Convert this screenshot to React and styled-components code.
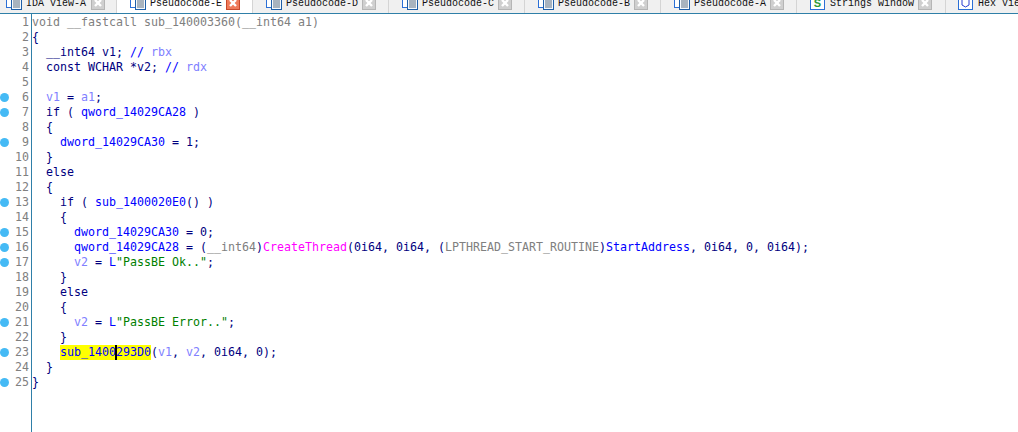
import styled, { createGlobalStyle } from 'styled-components';

const Global = createGlobalStyle`
  html, body {
    margin: 0;
    padding: 0;
    background: #fff;
  }
`;

const Page = styled.div`
  width: 1018px;
  height: 432px;
  display: flex;
  flex-direction: column;
  overflow: hidden;
`;

const TabBar = styled.div`
  height: 13px;
  flex: none;
  display: flex;
  align-items: flex-end;
  background: #f0f0f0;
  border-bottom: 1px solid #2f7fa8;
  overflow: hidden;
`;

const Tab = styled.div`
  width: ${(p) => p.$width}px;
  height: 20px;
  flex: none;
  box-sizing: border-box;
  display: flex;
  align-items: center;
  gap: ${(p) => p.$gap}px;
  padding-left: ${(p) => p.$pad}px;
  background: ${(p) => (p.$active ? '#fff' : 'transparent')};
  border-right: 1px solid #d4d4d4;
  font-family: "Liberation Mono", monospace;
  font-size: 10px;
  color: #111;
`;

const TabLabel = styled.span`
  width: ${(p) => p.$width}px;
  flex: none;
  white-space: pre;
  overflow: hidden;
`;

const Close = styled.span`
  width: 14px;
  height: 14px;
  flex: none;
  display: flex;
  align-items: center;
  justify-content: center;
  box-sizing: border-box;
  margin-left: ${(p) => p.$shift}px;
  border: 1px solid ${(p) => (p.$active ? '#c8492c' : '#b5b5b5')};
  background: ${(p) => (p.$active ? '#ef7a5a' : '#cfcfcf')};
`;

const Editor = styled.div`
  flex: 1;
  display: flex;
  font-family: "DejaVu Sans Mono", monospace;
  font-size: 11.63px;
  line-height: 15px;
`;

const Gutter = styled.div`
  width: 32px;
  flex: none;
  box-sizing: border-box;
  padding-top: 1px;
  border-right: 1px solid #2f7fa8;
`;

const GutterRow = styled.div`
  height: 15px;
  display: flex;
  align-items: center;
  justify-content: space-between;
  padding: 0 2px 0 0;
  color: #808080;
`;

const Dot = styled.span`
  width: 9px;
  height: 9px;
  border-radius: 50%;
  background: ${(p) => (p.$on ? '#45baf5' : 'transparent')};
`;

const Code = styled.div`
  flex: 1;
  padding-top: 1px;
  min-width: 0;
`;

const Line = styled.div`
  height: 15px;
  white-space: pre;
  color: #000080;
`;

const Ident = styled.span`
  color: #0000ff;
`;

const Local = styled.span`
  color: #8080ff;
`;

const Gray = styled.span`
  color: #808080;
`;

const Str = styled.span`
  color: #008000;
`;

const Api = styled.span`
  color: #ff00ff;
`;

const Comment = styled.span`
  color: #0000ff;
`;

const Mark = styled.span`
  background: #ffff00;
  color: #0000ff;
  display: inline-block;
  height: 15px;
  position: relative;
`;

const Caret = styled.span`
  position: absolute;
  left: 55px;
  top: 0;
  width: 2px;
  height: 15px;
  background: #000;
`;

function PseudoIcon() {
  return (
    <svg width="17" height="14" viewBox="0 0 17 14" style={{ flex: 'none' }}>
      <rect x="0.5" y="0.5" width="10" height="11" fill="#fff" stroke="#2b6fd6" />
      <rect x="5.5" y="2.5" width="10" height="11" fill="#f4f8fd" stroke="#1f5fa8" />
      <path d="M7 5h7M7 7h7M7 9h7M7 11h7" stroke="#5c6f80" />
    </svg>
  );
}

function StringsIcon() {
  return (
    <svg width="15" height="14" viewBox="0 0 15 14" style={{ flex: 'none' }}>
      <rect x="0.5" y="0.5" width="14" height="13" fill="#fff" stroke="#2b6fd6" />
      <text x="7.5" y="11" textAnchor="middle" fontFamily="Liberation Sans" fontWeight="700" fontSize="11" fill="#2e9b3a">S</text>
    </svg>
  );
}

function HexIcon() {
  return (
    <svg width="15" height="14" viewBox="0 0 15 14" style={{ flex: 'none' }}>
      <rect x="0.5" y="0.5" width="14" height="13" fill="#fff" stroke="#2b6fd6" />
      <path d="M4 3v6l3.5 2 3.5-2V3" fill="none" stroke="#2a3fd0" />
    </svg>
  );
}

function CloseMark() {
  return (
    <svg width="10" height="10" viewBox="0 0 10 10">
      <path d="M2 2l6 6M8 2l-6 6" stroke="#fff" strokeWidth="2.4" />
    </svg>
  );
}

const tabs = [
  { label: 'IDA View-A', width: 117, labelWidth: 62, pad: 6, gap: 3 },
  { label: 'Pseudocode-E', width: 136, labelWidth: 73, pad: 13, gap: 3, active: true },
  { label: 'Pseudocode-D', width: 136, labelWidth: 73, pad: 13, gap: 3 },
  { label: 'Pseudocode-C', width: 136, labelWidth: 73, pad: 13, gap: 3 },
  { label: 'Pseudocode-B', width: 136, labelWidth: 73, pad: 13, gap: 3 },
  { label: 'Pseudocode-A', width: 136, labelWidth: 73, pad: 13, gap: 3 },
  { label: 'Strings window', width: 149, labelWidth: 85, pad: 13, gap: 5, icon: <StringsIcon /> },
  { label: 'Hex View-1', width: 80, labelWidth: 60, pad: 12, gap: 5, icon: <HexIcon />, noClose: true },
];

const dots = [6, 7, 9, 13, 15, 16, 17, 21, 23, 25];

const lines = [
  <Gray>void __fastcall sub_140003360(__int64 a1)</Gray>,
  '{',
  <>  __int64 v1; <Comment>//</Comment> <Local>rbx</Local></>,
  <>  const WCHAR *v2; <Comment>//</Comment> <Local>rdx</Local></>,
  '',
  <>  <Local>v1</Local> = <Local>a1</Local>;</>,
  <>  if ( <Ident>qword_14029CA28</Ident> )</>,
  '  {',
  <>    <Ident>dword_14029CA30</Ident> = 1;</>,
  '  }',
  '  else',
  '  {',
  <>    if ( <Ident>sub_1400020E0</Ident>() )</>,
  '    {',
  <>      <Ident>dword_14029CA30</Ident> = 0;</>,
  <>      <Ident>qword_14029CA28</Ident> = (<Gray>__int64</Gray>)<Api>CreateThread</Api>(0i64, 0i64, (<Gray>LPTHREAD_START_ROUTINE</Gray>)<Ident>StartAddress</Ident>, 0i64, 0, 0i64);</>,
  <>      <Local>v2</Local> = <Ident>L</Ident><Str>"PassBE Ok.."</Str>;</>,
  '    }',
  '    else',
  '    {',
  <>      <Local>v2</Local> = <Ident>L</Ident><Str>"PassBE Error.."</Str>;</>,
  '    }',
  <>    <Mark>sub_1400293D0<Caret /></Mark>(<Local>v1</Local>, <Local>v2</Local>, 0i64, 0);</>,
  '  }',
  '}',
];

export default function App() {
  return (
    <Page>
      <Global />
      <TabBar>
        {tabs.map((t) => (
          <Tab key={t.label} $width={t.width} $active={t.active} $pad={t.pad} $gap={t.gap}>
            {t.icon || <PseudoIcon />}
            <TabLabel $width={t.labelWidth}>{t.label}</TabLabel>
            {!t.noClose && (
              <Close $active={t.active} $shift={3 - t.gap}>
                <CloseMark />
              </Close>
            )}
          </Tab>
        ))}
      </TabBar>
      <Editor>
        <Gutter>
          {lines.map((_, i) => (
            <GutterRow key={i}>
              <Dot $on={dots.includes(i + 1)} />
              {i + 1}
            </GutterRow>
          ))}
        </Gutter>
        <Code>
          {lines.map((l, i) => (
            <Line key={i}>{l}</Line>
          ))}
        </Code>
      </Editor>
    </Page>
  );
}
